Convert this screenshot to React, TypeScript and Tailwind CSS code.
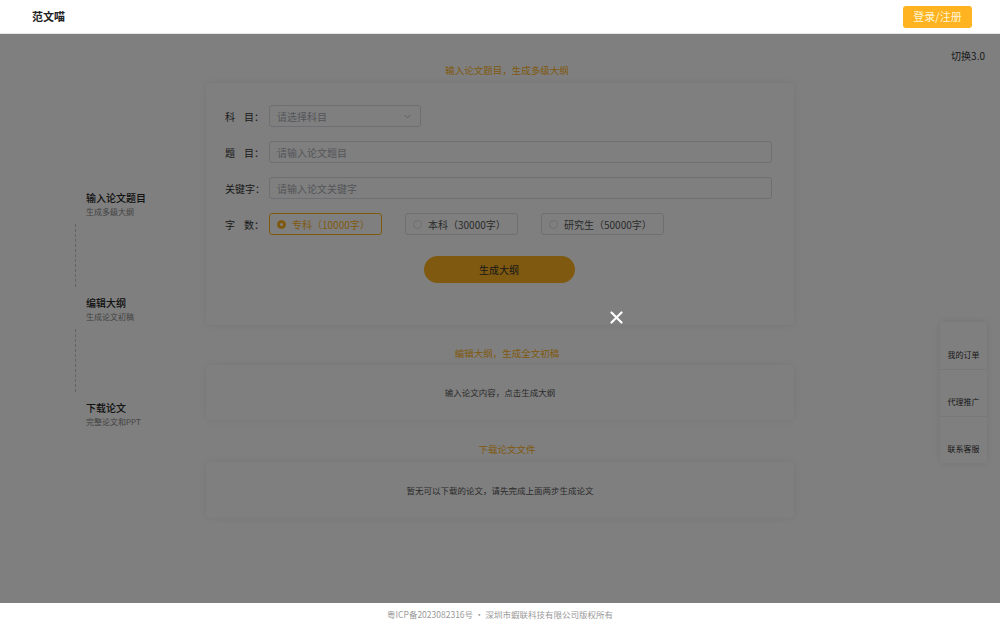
import React from "react";

function Step({ title, sub }: { title: string; sub: string }) {
  return (
    <div className="pl-[11px]">
      <div className="text-[10px] leading-[14px] font-medium text-[#222]">{title}</div>
      <div className="text-[8px] leading-[12px] mt-[1px] text-[#888]">{sub}</div>
    </div>
  );
}

function Label({ children }: { children: React.ReactNode }) {
  return <div className="w-[44px] shrink-0 text-[10px] text-[#333] flex items-center">{children}</div>;
}

function Radio({ text, checked, w }: { text: string; checked?: boolean; w: string }) {
  return (
    <div
      className={`${w} h-[22px] rounded-[3px] border flex items-center pl-[7px] text-[10px] ${
        checked ? "border-[#ffb320] text-[#ffb320]" : "border-[#dcdfe6] text-[#555]"
      }`}
    >
      <span
        className={`w-[9px] h-[9px] rounded-full border flex items-center justify-center mr-[6px] ${
          checked ? "bg-[#ffb320] border-[#ffb320]" : "bg-white border-[#dcdfe6]"
        }`}
      >
        {checked && <span className="w-[3px] h-[3px] rounded-full bg-white" />}
      </span>
      {text}
    </div>
  );
}

export default function App() {
  return (
    <div
      className="w-full h-[625px] flex flex-col bg-white overflow-hidden"
      style={{ fontFamily: '"Noto Sans CJK SC", "Noto Sans", sans-serif' }}
    >
      <header className="h-[34px] shrink-0 flex items-center justify-between pl-[32px] pr-[28px] border-b border-[#e5e5e5]">
        <div className="text-[11px] font-bold text-[#222]">范文喵</div>
        <button className="w-[69px] h-[22px] rounded-[3px] bg-[#ffb320] text-[11px] text-[#fff6d6]">登录/注册</button>
      </header>

      <main className="flex-1 relative overflow-hidden bg-white">
        <div className="grid grid-cols-[1fr_588px_1fr] h-full">
          <div className="pl-[75px] pt-[157px]">
            <Step title="输入论文题目" sub="生成多级大纲" />
            <div className="h-[63px] mt-[6px] mb-[9px] border-l border-dashed border-[#c8c8c8]" />
            <Step title="编辑大纲" sub="生成论文初稿" />
            <div className="h-[63px] mt-[6px] mb-[9px] border-l border-dashed border-[#c8c8c8]" />
            <Step title="下载论文" sub="完整论文和PPT" />
          </div>

          <div className="pt-[29px]">
            <div className="text-center pl-[14px] text-[9.5px] leading-[14px] mb-[6px] text-[#ffb320]">输入论文题目，生成多级大纲</div>
            <div className="bg-white rounded-[4px] shadow-[0_0_10px_rgba(0,0,0,0.08)] pt-[22px] pl-[19px] pr-[22px] pb-[42px]">
              <div className="flex flex-col gap-[14px]">
                <div className="flex h-[22px]">
                  <Label>
                    科<span className="ml-[9px]">目：</span>
                  </Label>
                  <div className="w-[152px] h-[22px] rounded-[3px] border border-[#dcdfe6] flex items-center justify-between pl-[7px] pr-[8px] text-[10px] text-[#a8abb2]">
                    请选择科目
                    <svg width="9" height="9" viewBox="0 0 10 10" fill="none">
                      <path d="M2 3.5 L5 6.5 L8 3.5" stroke="#b0b3b8" strokeWidth="1" />
                    </svg>
                  </div>
                </div>
                <div className="flex h-[22px]">
                  <Label>
                    题<span className="ml-[9px]">目：</span>
                  </Label>
                  <div className="flex-1 h-[22px] rounded-[3px] border border-[#dcdfe6] flex items-center pl-[7px] text-[10px] text-[#a8abb2]">
                    请输入论文题目
                  </div>
                </div>
                <div className="flex h-[22px]">
                  <Label>关键字：</Label>
                  <div className="flex-1 h-[22px] rounded-[3px] border border-[#dcdfe6] flex items-center pl-[7px] text-[10px] text-[#a8abb2]">
                    请输入论文关键字
                  </div>
                </div>
                <div className="flex h-[22px]">
                  <Label>
                    字<span className="ml-[9px]">数：</span>
                  </Label>
                  <div className="flex gap-[23px]">
                    <Radio text="专科（10000字）" checked w="w-[113px]" />
                    <Radio text="本科（30000字）" w="w-[113px]" />
                    <Radio text="研究生（50000字）" w="w-[123px]" />
                  </div>
                </div>
              </div>
              <div className="mt-[21px] flex justify-center pl-[1px]">
                <button className="w-[151px] h-[27px] rounded-full bg-[#ffb320] text-[10px] text-[#333]">生成大纲</button>
              </div>
            </div>

            <div className="mt-[21px] text-center pl-[14px] text-[9.5px] leading-[14px] mb-[5px] text-[#ffb320]">编辑大纲，生成全文初稿</div>
            <div className="bg-white rounded-[4px] shadow-[0_0_10px_rgba(0,0,0,0.08)] h-[55px] flex items-center justify-center text-[8.5px] text-[#555]">
              输入论文内容，点击生成大纲
            </div>

            <div className="mt-[22px] text-center pl-[14px] text-[9.5px] leading-[14px] mb-[6px] text-[#ffb320]">下载论文文件</div>
            <div className="bg-white rounded-[4px] shadow-[0_0_10px_rgba(0,0,0,0.08)] h-[56px] flex items-center justify-center text-[8.5px] text-[#555]">
              暂无可以下载的论文，请先完成上面两步生成论文
            </div>
          </div>

          <div className="flex justify-end pr-[15px] pt-[15px]">
            <div className="text-[10px] leading-[14px] text-[#333] h-[14px]">切换3.0</div>
          </div>
        </div>

        <div className="absolute right-[13px] top-[288px] w-[47px] bg-white rounded-[3px] shadow-[0_0_8px_rgba(0,0,0,0.1)] flex flex-col">
          {["我的订单", "代理推广", "联系客服"].map((t, i) => (
            <div
              key={t}
              className={`h-[47px] flex items-end justify-center pb-[8px] text-[8px] leading-[12px] text-[#333] ${
                i > 0 ? "border-t border-[#f0f0f0]" : ""
              }`}
            >
              {t}
            </div>
          ))}
        </div>

        <div className="absolute inset-0 bg-black/50" />
        <svg
          className="absolute left-[610px] top-[277px]"
          width="13"
          height="13"
          viewBox="0 0 13 13"
          fill="none"
        >
          <path d="M1.5 1.5 L11.5 11.5 M11.5 1.5 L1.5 11.5" stroke="white" strokeWidth="2.2" strokeLinecap="round" />
        </svg>
      </main>

      <footer className="h-[22px] shrink-0 flex items-center justify-center text-[8.5px] text-[#999] bg-white">
        粤ICP备2023082316号 · 深圳市蝦联科技有限公司版权所有
      </footer>
    </div>
  );
}
